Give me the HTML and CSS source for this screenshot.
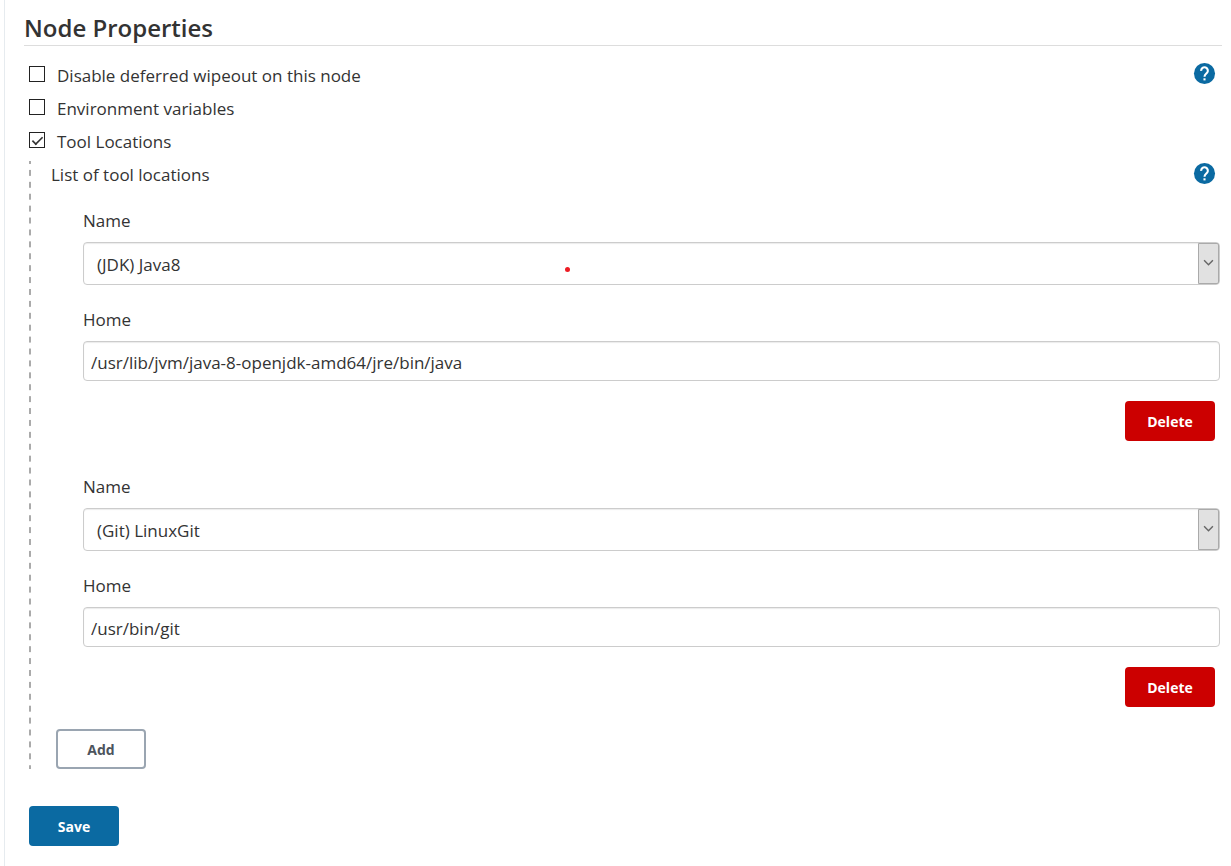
FILE: index.html
```
<!DOCTYPE html>
<html lang="en">
<head>
    <meta charset="UTF-8">
    <meta name="viewport" content="width=device-width, initial-scale=1.0">
    <title>Node Properties</title>
    <link rel="stylesheet" href="styles.css">
</head>
<body>
    <form class="config">
        <h1 class="section-title">Node Properties</h1>

        <div class="option-row">
            <input type="checkbox" id="wipeout">
            <label for="wipeout">Disable deferred wipeout on this node</label>
            <button type="button" class="help" aria-label="Help for deferred wipeout">
                <svg viewBox="0 0 24 24"><circle cx="12" cy="12" r="11" fill="#0b6aa2"/><path d="M8.500 9.200a3.500 3.500 0 1 1 5.900 2.300c-1.300 1.200-2.400 1.800-2.400 4" fill="none" stroke="#fff" stroke-width="2.200"/><path d="M10.900 17h2.200v2.200h-2.200z" fill="#fff"/></svg>
            </button>
        </div>
        <div class="option-row">
            <input type="checkbox" id="envvars">
            <label for="envvars">Environment variables</label>
        </div>
        <div class="option-row">
            <input type="checkbox" id="tools" checked>
            <label for="tools">Tool Locations</label>
        </div>

        <div class="nested">
            <div class="list-row">
                <span>List of tool locations</span>
                <button type="button" class="help" aria-label="Help for tool locations">
                    <svg viewBox="0 0 24 24"><circle cx="12" cy="12" r="11" fill="#0b6aa2"/><path d="M8.500 9.200a3.500 3.500 0 1 1 5.900 2.300c-1.300 1.200-2.400 1.800-2.400 4" fill="none" stroke="#fff" stroke-width="2.200"/><path d="M10.900 17h2.200v2.200h-2.200z" fill="#fff"/></svg>
                </button>
            </div>

            <div class="tool">
                <label for="name1">Name</label>
                <div class="select-box">
                    <select id="name1">
                        <option>(JDK) Java8</option>
                        <option>(Git) LinuxGit</option>
                    </select>
                    <span class="arrow"><svg viewBox="0 0 10 6"><path d="M1 1l4 4 4-4"/></svg></span>
                    <span class="marker"></span>
                </div>
                <label for="home1">Home</label>
                <input type="text" id="home1" value="/usr/lib/jvm/java-8-openjdk-amd64/jre/bin/java">
                <button type="button" class="btn btn-delete">Delete</button>
            </div>

            <div class="tool">
                <label for="name2">Name</label>
                <div class="select-box">
                    <select id="name2">
                        <option>(Git) LinuxGit</option>
                        <option>(JDK) Java8</option>
                    </select>
                    <span class="arrow"><svg viewBox="0 0 10 6"><path d="M1 1l4 4 4-4"/></svg></span>
                </div>
                <label for="home2">Home</label>
                <input type="text" id="home2" value="/usr/bin/git">
                <button type="button" class="btn btn-delete">Delete</button>
            </div>

            <button type="button" class="btn btn-add">Add</button>
        </div>

        <button type="submit" class="btn btn-save">Save</button>
    </form>
</body>
</html>
```
FILE: styles.css
```
* {
    box-sizing: border-box;
}
body {
    margin: 0 0 0 4px;
    min-height: 100vh;
    border-left: 1px solid #e6ebef;
    background-color: #fff;
    color: #333;
    font-family: "Open Sans", "Noto Sans", sans-serif;
    font-size: 17px;
    line-height: 24px;
}
.config {
    padding: 11px 9px 20px 19px;
}
.section-title {
    margin: 0 0 13px;
    padding-bottom: 1px;
    border-bottom: 1px solid #ddd;
    font-size: 24px;
    font-weight: 600;
    line-height: 33px;
}
.option-row {
    display: flex;
    align-items: center;
    height: 33px;
    padding: 0 6px 0 5px;
}
.option-row input {
    display: grid;
    place-content: center;
    width: 16px;
    height: 16px;
    margin: 0 12px 3px 0;
    border: 1px solid #222;
    background-color: #fff;
    appearance: none;
}
.option-row input:checked::before {
    content: "";
    width: 11px;
    height: 5px;
    border: solid #333;
    border-width: 0 0 2px 2px;
    transform: translateY(-1px) rotate(-45deg) scale(0.8);
}
.help {
    width: 23px;
    height: 23px;
    margin: 0 0 4px auto;
    padding: 0;
    border: 0;
    background: none;
    cursor: pointer;
}
.help svg {
    display: block;
}
/* dashed guide down the left side */
.nested {
    margin: 3px 0 37px 5px;
    padding-left: 22px;
    background: linear-gradient(#aaa 0 3px, transparent 3px 9px, #aaa 9px) left top / 2px 12px;
    background-repeat: no-repeat round;
}
.list-row {
    display: flex;
    align-items: center;
    height: 27px;
    padding-right: 6px;
}
.list-row .help {
    margin-bottom: 2px;
}
.tool {
    display: flex;
    flex-direction: column;
    padding: 21px 2px 13px 32px;
}
.tool + .tool {
    padding-bottom: 22px;
}
.tool label {
    margin-bottom: 9px;
}
.select-box {
    position: relative;
    display: flex;
    height: 43px;
    margin-bottom: 23px;
    border: 1px solid #ccc;
    border-radius: 4px;
    box-shadow: inset 0 1px 1px rgba(0, 0, 0, 0.08);
}
.select-box select {
    flex: 1;
    padding: 2px 13px 0;
    border: 0;
    background: none;
    color: #333;
    font: inherit;
    appearance: none;
}
.arrow {
    display: flex;
    align-items: center;
    justify-content: center;
    width: 21px;
    padding-bottom: 2px;
    border: 1px solid #aaa;
    border-radius: 0 2px 2px 0;
    background-color: #e1e1e1;
    pointer-events: none;
}
.arrow svg {
    width: 11px;
    height: 7px;
    fill: none;
    stroke: #666;
    stroke-width: 1.3;
}
.marker {
    position: absolute;
    top: 24px;
    left: 481px;
    width: 5px;
    height: 5px;
    border-radius: 50%;
    background-color: #ed1c24;
}
.tool input {
    height: 40px;
    margin-bottom: 20px;
    padding: 3px 7px 0;
    border: 1px solid #ccc;
    border-radius: 4px;
    box-shadow: inset 0 1px 1px rgba(0, 0, 0, 0.08);
    color: #333;
    font: inherit;
}
.btn {
    display: block;
    width: 90px;
    height: 40px;
    padding: 0;
    border: 0;
    border-radius: 4px;
    color: #fff;
    font: bold 14px "Open Sans", "Noto Sans", sans-serif;
    cursor: pointer;
}
.btn-delete {
    align-self: flex-end;
    margin-right: 5px;
    background-color: #c00;
}
.btn-add {
    margin-left: 5px;
    border: 2px solid #9aa5b1;
    background-color: #fff;
    color: #4d545d;
}
.btn-save {
    margin-left: 5px;
    background-color: #0b6aa2;
}
```
